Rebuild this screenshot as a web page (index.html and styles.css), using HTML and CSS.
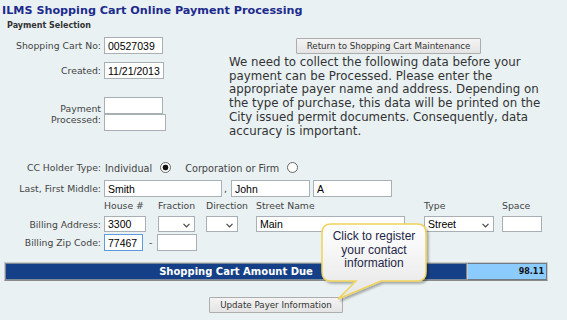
FILE: index.html
```html
<html>
    <head>
        <title>ILMS Shopping Cart Online Payment Processing</title>
        <link rel="stylesheet" href="styles.css">
    </head>
    <body>
        <div class="page">
            <h1 class="title">ILMS Shopping Cart Online Payment Processing</h1>
            <div class="section">Payment Selection</div>

            <!--Datos del carrito a la izquierda, boton y aviso a la derecha-->
            <div class="top">
                <div class="left">
                    <div class="row">
                        <label class="lbl">Shopping Cart No:</label>
                        <input type="text" class="txt w58" value="00527039">
                    </div>
                    <div class="row created">
                        <label class="lbl">Created:</label>
                        <input type="text" class="txt w59" value="11/21/2013">
                    </div>
                    <div class="row processed">
                        <label class="lbl">Payment<br>Processed:</label>
                        <div class="stack">
                            <input type="text" class="txt w58">
                            <input type="text" class="txt w62">
                        </div>
                    </div>
                </div>
                <div class="right">
                    <button type="button" class="btn btnReturn">Return to Shopping Cart Maintenance</button>
                    <p class="notice">We need to collect the following data before your payment can be Processed. Please enter the appropriate payer name and address. Depending on the type of purchase, this data will be printed on the City issued permit documents. Consequently, data accuracy is important.</p>
                </div>
            </div>

            <div class="row holder">
                <label class="lbl">CC Holder Type:</label>
                <span class="opt">Individual</span>
                <input type="radio" name="holder" class="radio first" checked>
                <span class="opt corp">Corporation or Firm</span>
                <input type="radio" name="holder" class="radio">
            </div>

            <div class="row name">
                <label class="lbl">Last, First Middle:</label>
                <input type="text" class="txt w118" value="Smith">
                <span class="comma">,</span>
                <input type="text" class="txt w78" value="John">
                <input type="text" class="txt w79 middle" value="A">
            </div>

            <!--Direccion de facturacion en columnas-->
            <div class="address">
                <div class="head">House #</div>
                <div class="head">Fraction</div>
                <div class="head">Direction</div>
                <div class="head">Street Name</div>
                <div class="head">Type</div>
                <div class="head">Space</div>
            </div>
            <div class="row billing">
                <label class="lbl">Billing Address:</label>
                <div class="address cols">
                    <input type="text" class="txt w42" value="3300">
                    <span class="sel w37"><select><option></option></select><svg class="chev" width="7" height="5" viewBox="0 0 7 5"><path d="M0.5 0.8 L3.5 3.8 L6.5 0.8" fill="none" stroke="#444" stroke-width="1.2"/></svg></span>
                    <span class="sel w32"><select><option></option></select><svg class="chev" width="7" height="5" viewBox="0 0 7 5"><path d="M0.5 0.8 L3.5 3.8 L6.5 0.8" fill="none" stroke="#444" stroke-width="1.2"/></svg></span>
                    <input type="text" class="txt w149" value="Main">
                    <span class="sel w70"><select><option>Street</option></select><svg class="chev" width="7" height="5" viewBox="0 0 7 5"><path d="M0.5 0.8 L3.5 3.8 L6.5 0.8" fill="none" stroke="#444" stroke-width="1.2"/></svg></span>
                    <input type="text" class="txt w40">
                </div>
            </div>
            <div class="row zip">
                <label class="lbl">Billing Zip Code:</label>
                <input type="text" class="txt w39 focused" value="77467">
                <span class="dash">-</span>
                <input type="text" class="txt w40">
            </div>

            <div class="due">
                <div class="dueLabel">Shopping Cart Amount Due</div>
                <div class="dueAmount">98.11</div>
            </div>

            <div class="actions">
                <button type="button" class="btn">Update Payer Information</button>
            </div>

            <!--Globo de ayuda sobre el boton-->
            <div class="tip">
                <svg class="tipShape" width="116" height="84" viewBox="0 0 116 84">
                    <defs>
                        <linearGradient id="tipFill" x1="0" y1="0" x2="0" y2="1">
                            <stop offset="0" stop-color="#ffffff"/>
                            <stop offset="1" stop-color="#e6e6e6"/>
                        </linearGradient>
                        <filter id="tipShadow" x="-10%" y="-10%" width="130%" height="130%">
                            <feDropShadow dx="2" dy="2" stdDeviation="1.2" flood-color="#000" flood-opacity="0.3"/>
                        </filter>
                    </defs>
                    <path d="M13,4 H99 Q108,4 108,13 V52 Q108,61 99,61 H63 L20,79 L38,61 H13 Q4,61 4,52 V13 Q4,4 13,4 Z" fill="url(#tipFill)" stroke="#f0d35a" stroke-width="1.5" filter="url(#tipShadow)"/>
                </svg>
                <div class="tipText">Click to register<br>your contact<br>information</div>
            </div>
        </div>
    </body>
</html>
```

FILE: styles.css
```css
body
{
    margin: 0;
    background-color: #e9f1f3;
    font-family: "DejaVu Sans", Verdana, sans-serif;
    color: #444;
    overflow: hidden;
}
.page
{
    position: relative;
    width: 567px;
    height: 320px;
}
.title
{
    margin: 0;
    padding: 4px 0 0 2px;
    font-size: 11.2px;
    line-height: 14px;
    font-weight: bold;
    color: #1d2b8d;
}
.section
{
    margin-top: 3px;
    padding-left: 7px;
    font-size: 8px;
    line-height: 10px;
    font-weight: bold;
    color: #333;
}
.top
{
    display: flex;
    align-items: flex-start;
    margin-top: 6px;
}
.left
{
    width: 229px;
    flex: none;
}
.right
{
    width: 319px;
    text-align: center;
}
.row
{
    display: flex;
    align-items: center;
}
.lbl
{
    width: 101px;
    flex: none;
    margin-right: 3px;
    text-align: right;
    font-size: 9.3px;
    line-height: 11px;
}
.created
{
    margin-top: 8px;
}
.processed
{
    margin-top: 18px;
}
.stack
{
    display: flex;
    flex-direction: column;
    align-items: flex-start;
}
.txt
{
    height: 17px;
    box-sizing: border-box;
    margin: 0;
    padding: 0 3px;
    border: 1px solid #a9b0b5;
    background-color: #fff;
    font: 10.5px "Liberation Sans Narrow", "Arial Narrow", "Liberation Sans", sans-serif;
    color: #000;
    outline: none;
}
.focused
{
    border-color: #5d9be0;
}
.w37 { width: 37px; }
.w32 { width: 32px; }
.w39 { width: 39px; }
.w40 { width: 40px; }
.w42 { width: 42px; }
.w58 { width: 59px; }
.w59 { width: 60px; }
.w62 { width: 62px; }
.w70 { width: 70px; }
.w78 { width: 79px; }
.w79 { width: 79px; }
.w118 { width: 118px; }
.w149 { width: 149px; }

.btn
{
    height: 16px;
    box-sizing: border-box;
    margin: 0;
    padding: 0 10px;
    border: 1px solid #adadad;
    border-radius: 1px;
    background: linear-gradient(#f4f4f4, #e4e4e4);
    font-family: "DejaVu Sans", Verdana, sans-serif;
    font-size: 8.7px;
    line-height: 14px;
    color: #333;
}
.btnReturn
{
    margin-top: 1px;
}
.notice
{
    margin: 2px 0 0 0;
    text-align: left;
    font-size: 11.8px;
    line-height: 13.7px;
    color: #333;
}

.holder
{
    margin-top: 22px;
    height: 14px;
}
.opt
{
    font-size: 9.7px;
    margin-top: 3px;
    margin-left: 1px;
}
.corp
{
    margin-left: 14px;
}
.radio
{
    appearance: none;
    width: 11px;
    height: 11px;
    margin: 0 0 0 8px;
    border: 1px solid #666;
    border-radius: 50%;
    background-color: #fff;
    box-sizing: border-box;
}
.radio:checked
{
    background: radial-gradient(circle, #111 0, #111 2.6px, #fff 3.2px);
}
.name
{
    margin-top: 6px;
}
.comma
{
    margin: 0 4px 0 2px;
    font-size: 9.5px;
    color: #444;
}
.middle
{
    margin-left: 3px;
}

.address
{
    display: grid;
    grid-template-columns: 54px 48px 50px 168px 78px 40px;
    align-items: center;
}
.head
{
    font-size: 9.3px;
    line-height: 12px;
}
.page > .address
{
    margin: 3px 0 0 104px;
}
.billing
{
    margin-top: 4px;
}
.sel
{
    position: relative;
    display: inline-block;
    height: 16px;
}
.sel select
{
    appearance: none;
    width: 100%;
    height: 16px;
    box-sizing: border-box;
    margin: 0;
    padding: 0 0 0 3px;
    border: 1px solid #a9b0b5;
    border-radius: 0;
    background-color: #fff;
    font: 10.5px "Liberation Sans Narrow", "Arial Narrow", "Liberation Sans", sans-serif;
    color: #000;
}
.chev
{
    position: absolute;
    right: 5px;
    top: 7px;
}
.billing .txt
{
    height: 16px;
}
.zip
{
    margin-top: 2px;
}
.dash
{
    margin: 0 5px 0 6px;
    font-size: 9.5px;
}

.due
{
    display: flex;
    width: 544px;
    height: 19px;
    box-sizing: border-box;
    margin: 11px 0 0 4px;
    border: 1px solid #c9c9c9;
    border-bottom: 1px solid #8a8a8a;
}
.dueLabel
{
    flex: 1;
    border: 1px solid #7d8a9a;
    background-color: #153f86;
    color: #fff;
    font-size: 10px;
    font-weight: bold;
    line-height: 15px;
    text-align: center;
}
.dueAmount
{
    width: 80px;
    box-sizing: border-box;
    border: 1px solid #6f7c88;
    border-left: 1px solid #c9c9c9;
    background-color: #8ccbfd;
    padding-right: 2px;
    color: #111;
    font-size: 8px;
    font-weight: bold;
    line-height: 15px;
    text-align: right;
}
.actions
{
    width: 544px;
    margin: 16px 0 0 4px;
    text-align: center;
}

.tip
{
    position: absolute;
    left: 318px;
    top: 220px;
    width: 116px;
    height: 84px;
}
.tipShape
{
    display: block;
}
.tipText
{
    position: absolute;
    left: 4px;
    top: 10px;
    width: 104px;
    text-align: center;
    font: 12px "Liberation Sans", Arial, sans-serif;
    line-height: 13.5px;
    color: #1f2648;
}
```
